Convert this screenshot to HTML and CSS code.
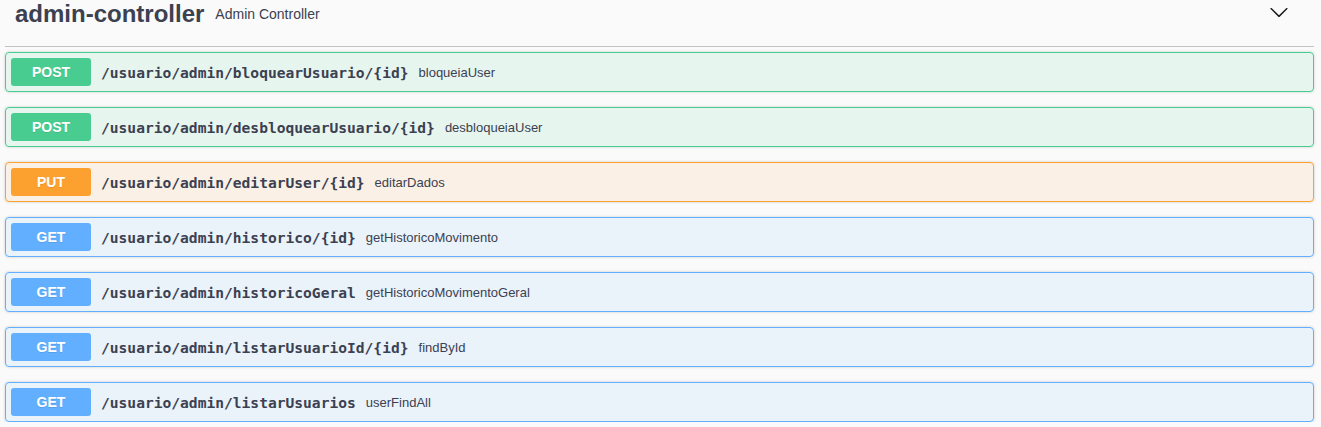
FILE: index.html
```html
<!DOCTYPE html>
<html lang="pt">
<head>
<meta charset="utf-8">
<title>admin-controller</title>
<link rel="stylesheet" href="styles.css">
</head>
<body>
<div class="section">
  <div class="tag">
    <h3 class="tag-name">admin-controller</h3>
    <small class="tag-desc">Admin Controller</small>
    <svg class="arrow" width="20" height="20" viewBox="0 0 20 20" aria-hidden="true"><path d="M17.418 6.109c.272-.268.709-.268.979 0s.271.701 0 .969l-7.908 7.83c-.27.268-.707.268-.979 0l-7.908-7.83c-.27-.268-.27-.701 0-.969.271-.268.709-.268.979 0L10 13.25l7.418-7.141z"/></svg>
  </div>
  <div class="ops">
    <div class="op op-post">
      <span class="method">POST</span>
      <span class="path">/usuario/admin/bloquearUsuario/{id}</span>
      <span class="desc">bloqueiaUser</span>
    </div>
    <div class="op op-post">
      <span class="method">POST</span>
      <span class="path">/usuario/admin/desbloquearUsuario/{id}</span>
      <span class="desc">desbloqueiaUser</span>
    </div>
    <div class="op op-put">
      <span class="method">PUT</span>
      <span class="path">/usuario/admin/editarUser/{id}</span>
      <span class="desc">editarDados</span>
    </div>
    <div class="op op-get">
      <span class="method">GET</span>
      <span class="path">/usuario/admin/historico/{id}</span>
      <span class="desc">getHistoricoMovimento</span>
    </div>
    <div class="op op-get">
      <span class="method">GET</span>
      <span class="path">/usuario/admin/historicoGeral</span>
      <span class="desc">getHistoricoMovimentoGeral</span>
    </div>
    <div class="op op-get">
      <span class="method">GET</span>
      <span class="path">/usuario/admin/listarUsuarioId/{id}</span>
      <span class="desc">findById</span>
    </div>
    <div class="op op-get">
      <span class="method">GET</span>
      <span class="path">/usuario/admin/listarUsuarios</span>
      <span class="desc">userFindAll</span>
    </div>
  </div>
</div>
</body>
</html>
```
FILE: styles.css
```css
html, body {
  margin: 0;
  padding: 0;
  background: #fafafa;
  font-family: "Liberation Sans", Arial, sans-serif;
  color: #3b4151;
}

.section {
  padding: 0 7px 0 5px;
}

.tag {
  display: flex;
  align-items: flex-start;
  height: 46px;
  padding-left: 10px;
  border-bottom: 1px solid rgba(59, 65, 81, 0.3);
  margin-bottom: 5px;
}

.tag-name {
  margin: 0;
  font-size: 24px;
  line-height: 28px;
  font-weight: bold;
  color: #3b4151;
}

.tag-desc {
  flex: 1;
  padding: 0 10px 0 11px;
  margin-top: 6px;
  font-size: 14px;
  line-height: 16px;
  color: #3b4151;
}

.arrow {
  margin: 2px 25px 0 0;
  fill: #1a1a1a;
}

.ops {
  display: flex;
  flex-direction: column;
  gap: 15px;
}

.op {
  display: flex;
  align-items: center;
  height: 38px;
  padding: 0 5px;
  border: 1px solid;
  border-radius: 4px;
  box-shadow: 0 0 3px rgba(0, 0, 0, 0.19);
}

.method {
  width: 80px;
  height: 28px;
  line-height: 28px;
  text-align: center;
  font-size: 14px;
  font-weight: bold;
  color: #fff;
  border-radius: 3px;
  text-shadow: 0 1px 0 rgba(0, 0, 0, 0.1);
  flex: none;
}

.path {
  padding: 0 10px;
  font-family: "DejaVu Sans Mono", "Liberation Mono", monospace;
  font-size: 14.6px;
  font-weight: bold;
  color: #3b4151;
}

.desc {
  font-size: 13px;
  color: #3b4151;
}

.op-post {
  border-color: #49cc90;
  background: rgba(73, 204, 144, 0.1);
}
.op-post .method { background: #49cc90; }

.op-put {
  border-color: #fca130;
  background: rgba(252, 161, 48, 0.1);
}
.op-put .method { background: #fca130; }

.op-get {
  border-color: #61affe;
  background: rgba(97, 175, 254, 0.1);
}
.op-get .method { background: #61affe; }
```
